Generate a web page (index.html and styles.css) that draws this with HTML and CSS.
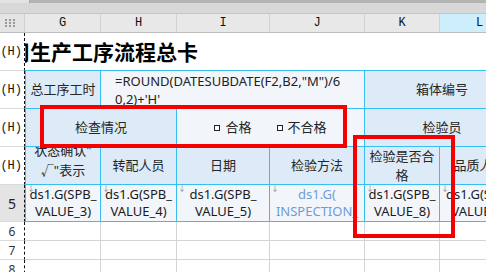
FILE: index.html
```html
<!DOCTYPE html>
<html lang="zh-CN">
<head>
    <meta charset="UTF-8">
    <meta name="viewport" content="width=device-width, initial-scale=1.0">
    <title>生产工序流程总卡</title>
    <link rel="stylesheet" href="styles.css">
</head>
<body>
    <div class="toolbar"><span class="toolbar-tab"></span></div>

    <div class="sheet">
        <!-- column headers -->
        <div class="corner">
            <svg width="10" height="8" viewBox="0 0 10 8">
                <rect x="0" y="0" width="2" height="2" fill="#9a9a9a"/>
                <rect x="4" y="0" width="2" height="2" fill="#9a9a9a"/>
                <rect x="8" y="0" width="2" height="2" fill="#9a9a9a"/>
                <rect x="0" y="3" width="2" height="2" fill="#9a9a9a"/>
                <rect x="4" y="3" width="2" height="2" fill="#9a9a9a"/>
                <rect x="8" y="3" width="2" height="2" fill="#9a9a9a"/>
                <rect x="0" y="6" width="2" height="2" fill="#9a9a9a"/>
                <rect x="4" y="6" width="2" height="2" fill="#9a9a9a"/>
                <rect x="8" y="6" width="2" height="2" fill="#9a9a9a"/>
            </svg>
        </div>
        <div class="col-head">G</div>
        <div class="col-head">H</div>
        <div class="col-head">I</div>
        <div class="col-head">J</div>
        <div class="col-head">K</div>
        <div class="col-head is-active">L</div>

        <!-- row 1 -->
        <div class="row-head">1(H)</div>
        <div class="cell title span-6"><span class="title-text">公司生产工序流程总卡</span></div>

        <!-- row 2 -->
        <div class="row-head">2(H)</div>
        <div class="cell blue first label">总工序工时</div>
        <div class="cell blue value formula span-3">=ROUND(DATESUBDATE(F2,B2,"M")/6<br>0,2)+'H'</div>
        <div class="cell blue label span-2">箱体编号</div>

        <!-- row 3 -->
        <div class="row-head">3(H)</div>
        <div class="cell blue first label span-2">检查情况</div>
        <div class="cell blue value span-2">
            <div class="checks">
                <span class="check"><span class="box"></span>合格</span>
                <span class="check"><span class="box"></span>不合格</span>
            </div>
        </div>
        <div class="cell blue label span-2">检验员</div>

        <!-- row 4 -->
        <div class="row-head">4(H)</div>
        <div class="cell blue first label"><span class="lift">状态确认"<br>√"表示</span></div>
        <div class="cell blue label">转配人员</div>
        <div class="cell blue label">日期</div>
        <div class="cell blue label">检验方法</div>
        <div class="cell blue label">检验是否合<br>格</div>
        <div class="cell blue label">品质人员</div>

        <!-- row 5 -->
        <div class="row-head num is-active">5</div>
        <div class="cell blue first data">ds1.G(SPB_<br>VALUE_3)</div>
        <div class="cell blue data">ds1.G(SPB_<br>VALUE_4)</div>
        <div class="cell blue data">ds1.G(SPB_<br>VALUE_5)</div>
        <div class="cell blue data link">ds1.G(<br>INSPECTION_</div>
        <div class="cell blue data">ds1.G(SPB_<br>VALUE_8)</div>
        <div class="cell blue data">ds1.G(SPB_<br>VALUE_9)</div>

        <!-- empty rows -->
        <div class="row-head num">6</div>
        <div class="cell"></div><div class="cell"></div><div class="cell"></div>
        <div class="cell"></div><div class="cell"></div><div class="cell"></div>
        <div class="row-head num">7</div>
        <div class="cell"></div><div class="cell"></div><div class="cell"></div>
        <div class="cell"></div><div class="cell"></div><div class="cell"></div>
        <div class="row-head num">8</div>
        <div class="cell"></div><div class="cell"></div><div class="cell"></div>
        <div class="cell"></div><div class="cell"></div><div class="cell"></div>

        <!-- annotation boxes -->
        <div class="mark mark-check"></div>
        <div class="mark mark-result"></div>
    </div>
</body>
</html>
```

FILE: styles.css
```css
* {
    box-sizing: border-box;
}
body {
    margin: 0;
    width: 486px;
    height: 272px;
    overflow: hidden;
    background: #fff;
    font-family: "Noto Sans", "Noto Sans CJK SC", sans-serif;
    font-size: 13px;
    color: #222;
}
.toolbar {
    height: 14px;
    background: #d8d8d8;
    border-top: 3px solid #b4b4b4;
    border-bottom: 1px solid #c6c6c6;
    display: flex;
}
.toolbar-tab {
    width: 30px;
    height: 3px;
    margin-top: -3px;
    background: #e2e2e2;
    border-right: 1px solid #a8a8a8;
}
.sheet {
    position: relative;
    display: grid;
    grid-template-columns: 25px 76px 76px 93px 95px 75px 80px;
    grid-template-rows: 19px 38px 38px 38px 38px 37px 19px 19px 19px;
    width: 520px;
}
.corner {
    display: flex;
    align-items: center;
    padding-left: 5px;
    background: #e4e4e4;
    border-right: 1px solid #cfcfcf;
    border-bottom: 1px solid #bdbdbd;
}
.col-head {
    display: flex;
    align-items: center;
    justify-content: center;
    background: #e8e8e8;
    border-right: 1px solid #d2d2d2;
    border-bottom: 1px solid #bdbdbd;
    font-family: "Liberation Mono", monospace;
    font-size: 12px;
    color: #111;
}
.col-head.is-active {
    background: #cdeefb;
}
.row-head {
    display: flex;
    align-items: center;
    justify-content: flex-end;
    padding-right: 2px;
    overflow: hidden;
    white-space: nowrap;
    background: #fff;
    border-right: 1px dashed #111;
    border-bottom: 1px solid #dadada;
    font-family: "Liberation Mono", monospace;
    font-size: 12px;
    color: #111;
}
.row-head.num {
    justify-content: center;
    padding-right: 0;
    font-family: "Noto Sans", sans-serif;
    font-size: 12px;
    color: #333;
}
.row-head.is-active {
    background: #e4e4e4;
    font-size: 14px;
    color: #222;
}
.cell {
    display: flex;
    align-items: center;
    justify-content: center;
    text-align: center;
    overflow: hidden;
    white-space: nowrap;
    line-height: 19px;
    border-right: 1px solid #d4d4d4;
    border-bottom: 1px solid #d4d4d4;
}
.span-2 { grid-column: span 2; }
.span-3 { grid-column: span 3; }
.span-6 { grid-column: span 6; }
.cell.blue {
    border-color: #36bff0;
}
.cell.first {
    border-left: 1px solid #36bff0;
}
.label {
    background: #dcebf7;
    color: #262626;
}
.value {
    background: #f2f6fb;
}
.title {
    justify-content: flex-start;
    border-right: none;
    border-bottom: 1px solid #36bff0;
}
.title-text {
    flex-shrink: 0;
    margin-left: -37px;
    font-family: "Noto Sans CJK SC", sans-serif;
    font-size: 21px;
    font-weight: bold;
    color: #000;
}
.formula {
    justify-content: flex-start;
    text-align: left;
    padding-left: 14px;
    line-height: 18px;
}
.checks {
    display: flex;
    gap: 25px;
}
.check {
    display: inline-flex;
    align-items: center;
}
.box {
    display: inline-block;
    width: 6px;
    height: 6px;
    margin-right: 5px;
    border: 1px solid #222;
    background: #fff;
}
.lift {
    margin-top: -12px;
    line-height: 20px;
}
.data {
    position: relative;
    background: #f2f6fb;
    line-height: 17px;
    color: #1a1a1a;
}
.data::before {
    content: "↓";
    position: absolute;
    top: -1px;
    left: 1px;
    font-size: 8px;
    line-height: 8px;
    color: #8c8c8c;
}
.data.link {
    color: #6f9bd8;
}
.mark {
    position: absolute;
    border: 4px solid #f40000;
}
.mark-check {
    left: 40px;
    top: 91px;
    width: 307px;
    height: 43px;
}
.mark-result {
    left: 353px;
    top: 121px;
    width: 102px;
    height: 103px;
}
```
